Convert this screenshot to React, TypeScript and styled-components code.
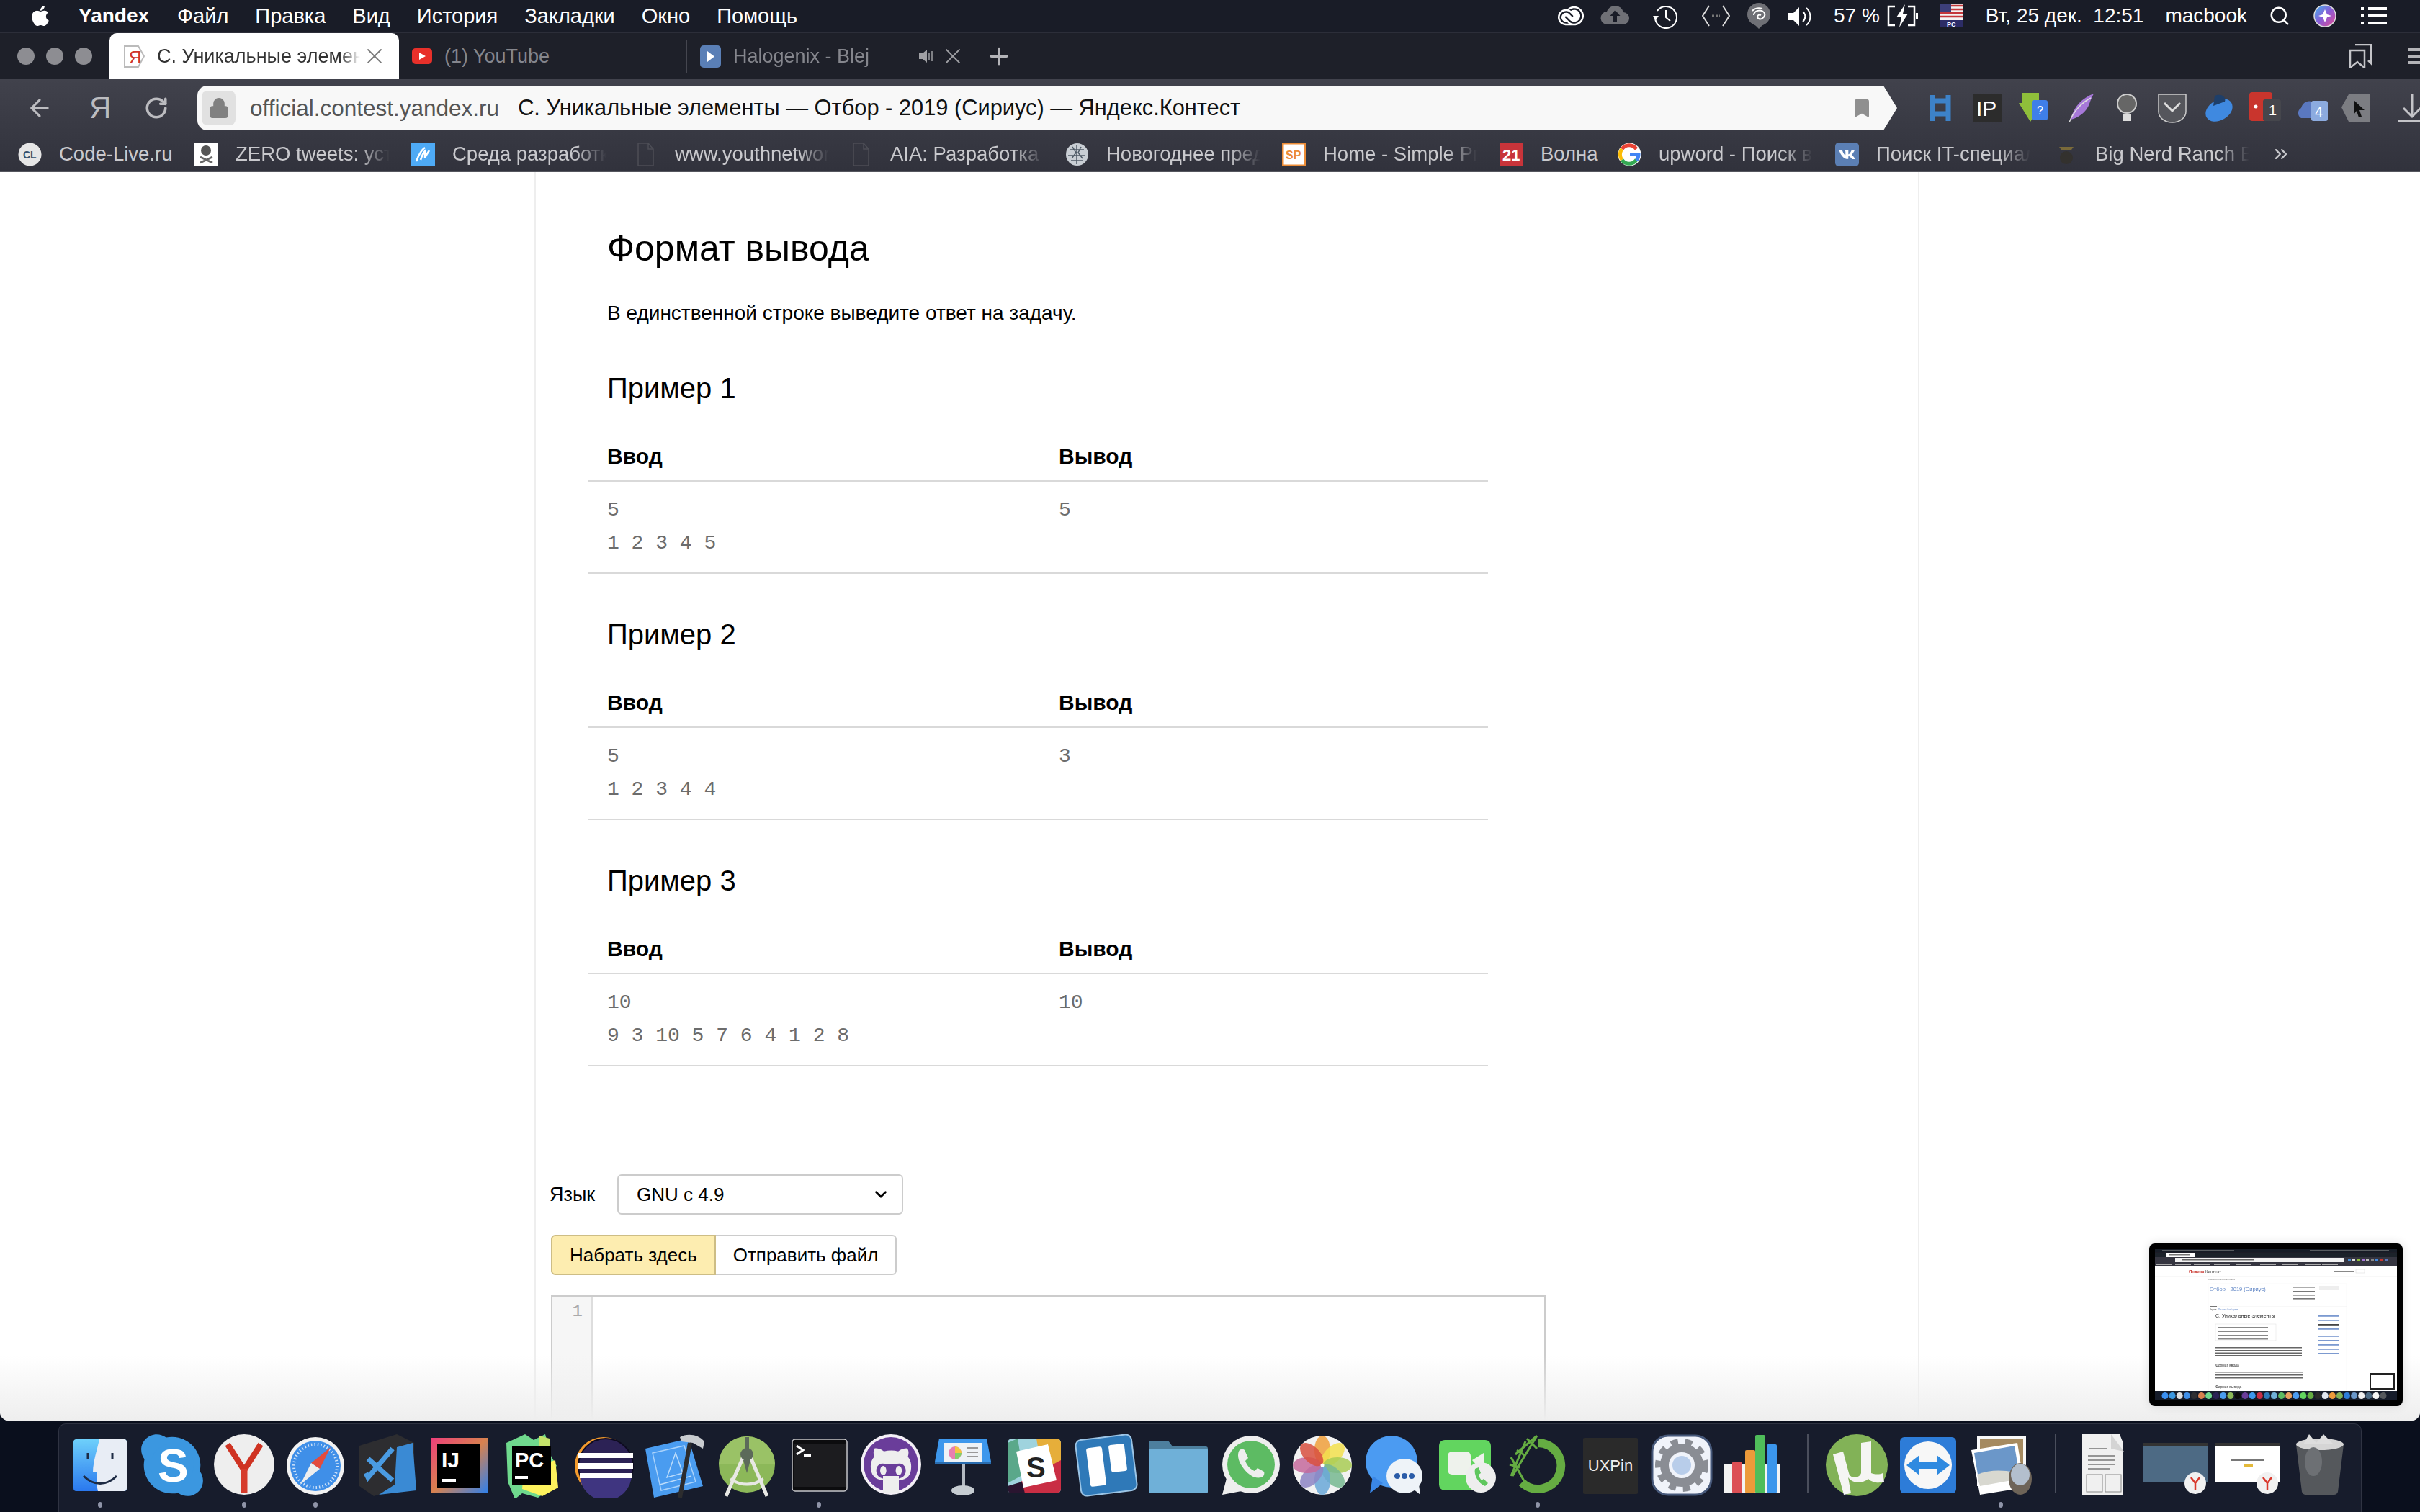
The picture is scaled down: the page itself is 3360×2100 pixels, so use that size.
import React from 'react';
import styled, { createGlobalStyle } from 'styled-components';
import { ArrowLeft, Bookmark, ChevronDown, ChevronsRight, Lock, Plus, RotateCw, Search, X } from 'lucide-react';
import { FaApple, FaGithubAlt, FaSkype, FaVk, FaWhatsapp } from 'react-icons/fa';
import { SiAdobecreativecloud } from 'react-icons/si';

const SANS = '"Liberation Sans", Arial, sans-serif';
const MONO = '"Liberation Mono", "Courier New", monospace';

const Global = createGlobalStyle`
  html, body { margin: 0; padding: 0; background: #000; }
  body { width: 3360px; height: 2100px; overflow: hidden; font-family: ${SANS}; }
`;

const Screen = styled.div`
  width: 3360px;
  height: 2100px;
  display: flex;
  flex-direction: column;
  overflow: hidden;
  background: #0a0f1d;
`;

/* ---- mac menu bar ---- */
const MenuBar = styled.div`
  height: 45px;
  flex: none;
  display: flex;
  align-items: center;
  padding: 0 46px 0 40px;
  box-sizing: border-box;
  background: #191c27;
  border-bottom: 1px solid #0b0d14;
  color: #fff;
  font-size: 29px;
`;
const AppName = styled.span`
  font-weight: 700;
  font-size: 28px;
  margin: 0 39px 0 37px;
`;
const MenuItems = styled.div`
  display: flex;
  gap: 37px;
`;
const Tray = styled.div`
  margin-left: auto;
  display: flex;
  align-items: center;
`;
const TrayItem = styled.div<{ $gap: number }>`
  display: flex;
  align-items: center;
  margin-left: ${p => p.$gap}px;
  white-space: pre;
  font-size: 28px;
`;

/* ---- tabs ---- */
const TabStrip = styled.div`
  height: 65px;
  flex: none;
  display: flex;
  align-items: stretch;
  background: #1e2029;
  border-top: 1px solid #2c2e39;
  box-sizing: border-box;
`;
const Lights = styled.div`
  width: 152px;
  display: flex;
  align-items: center;
  gap: 16px;
  padding-left: 24px;
  box-sizing: border-box;
`;
const Light = styled.span`
  width: 24px;
  height: 24px;
  border-radius: 50%;
  background: #8d8d92;
`;
const Tab = styled.div<{ $active?: boolean; $width: number }>`
  width: ${p => p.$width}px;
  box-sizing: border-box;
  display: flex;
  align-items: center;
  padding-left: ${p => (p.$active ? 18 : 16)}px;
  gap: 15px;
  font-size: 27px;
  color: ${p => (p.$active ? '#333' : '#85868d')};
  background: ${p => (p.$active ? '#fff' : 'transparent')};
  border-radius: ${p => (p.$active ? '10px 10px 0 0' : '0')};
`;
const TabTitle = styled.span<{ $width: number }>`
  width: ${p => p.$width}px;
  white-space: nowrap;
  overflow: hidden;
  mask-image: linear-gradient(to right, #000 90%, transparent);
`;
const TabClose = styled.span<{ $nudge: number; $color: string }>`
  display: flex;
  margin-left: ${p => p.$nudge}px;
  color: ${p => p.$color};
`;
const TabSep = styled.span`
  width: 1px;
  height: 46px;
  align-self: center;
  background: #45464f;
  flex: none;
`;
const PlusBox = styled.div`
  display: flex;
  align-items: center;
  margin-left: 16px;
  color: #b4b4b8;
`;
const StripEnd = styled.div`
  margin-left: auto;
  display: flex;
  align-items: center;
  gap: 50px;
  margin-right: -4px;
`;
const BurgerLines = styled.div`
  width: 20px;
  height: 22px;
  background: repeating-linear-gradient(to bottom, #b4b4b8 0 4px, transparent 4px 9px);
`;

/* ---- address bar ---- */
const Chrome = styled.div`
  flex: none;
  background: linear-gradient(to bottom, #41424c, #31323c);
  border-bottom: 1px solid #55565e;
`;
const Toolbar = styled.div`
  height: 71px;
  display: flex;
  align-items: flex-start;
  padding-top: 9px;
  box-sizing: border-box;
`;
const NavBox = styled.div`
  width: 274px;
  height: 62px;
  flex: none;
  display: flex;
  align-items: center;
  color: #bcbcc0;
`;
const BackArrow = styled.span`
  display: flex;
  margin-left: 36px;
`;
const NavYa = styled.span`
  font-size: 42px;
  margin: 0 46px 0 50px;
  color: #bcbcc0;
  line-height: 1;
`;
const AddressBar = styled.div`
  width: 2360px;
  height: 62px;
  flex: none;
  display: flex;
  align-items: center;
  padding-left: 6px;
  box-sizing: border-box;
  background: #f8f8f8;
  border-radius: 14px 0 0 14px;
  clip-path: polygon(0 0, 2341px 0, 100% 50%, 2341px 100%, 0 100%);
  font-size: 31.5px;
`;
const LockBox = styled.div`
  width: 47px;
  height: 48px;
  display: flex;
  align-items: center;
  justify-content: center;
  background: #e1e1e1;
  border-radius: 8px;
  color: #808080;
`;
const Host = styled.span`
  color: #555;
  margin: 0 26px 0 20px;
`;
const PageTitle = styled.span`
  color: #111;
  font-size: 30.8px;
`;
const StarBox = styled.div`
  margin-left: auto;
  margin-right: 34px;
  color: #8f8f8f;
  display: flex;
`;
const Extensions = styled.div`
  display: flex;
  align-items: center;
  height: 62px;
  margin-left: 45px;
`;
const Ext = styled.div<{ $gap: number }>`
  display: flex;
  margin-left: ${p => p.$gap}px;
`;

/* ---- bookmarks ---- */
const BookmarkBar = styled.div`
  height: 57px;
  box-sizing: border-box;
  display: flex;
  align-items: center;
  padding: 9px 0 0 25px;
  overflow: hidden;
`;
const Mark = styled.div<{ $width: number }>`
  width: ${p => p.$width}px;
  flex: none;
  display: flex;
  align-items: center;
  gap: 24px;
  color: #c9c9cd;
  font-size: 27.5px;
`;
const MarkIcon = styled.div`
  flex: none;
  width: 33px;
  height: 33px;
  display: flex;
`;
const MarkText = styled.span<{ $fade: boolean }>`
  white-space: nowrap;
  overflow: hidden;
  max-width: 214px;
  ${p => (p.$fade ? 'mask-image: linear-gradient(to right, #000 80%, transparent);' : '')}
`;

/* ---- page ---- */
const Viewport = styled.div`
  position: relative;
  flex: none;
  height: 1734px;
  background: #fff;
  overflow: hidden;
  border-radius: 0 0 12px 12px;
`;
const Sheet = styled.div`
  margin-left: 742px;
  width: 1923px;
  height: 100%;
  box-sizing: border-box;
  border-left: 2px solid #eee;
  border-right: 2px solid #eee;
  padding-top: 79px;
  color: #000;
`;
const Statement = styled.div`
  padding-left: 72px;
`;
const SectionTitle = styled.h2`
  margin: 0 0 45px 27px;
  font-size: 50px;
  line-height: 54px;
  font-weight: 400;
`;
const Para = styled.p`
  margin: 0 0 61px 27px;
  font-size: 28px;
  line-height: 36px;
`;
const ExampleTitle = styled.h3`
  margin: 0 0 52px 27px;
  font-size: 40px;
  line-height: 50px;
  font-weight: 400;
`;
const SampleTable = styled.div`
  width: 1250px;
  display: grid;
  grid-template-columns: 627px 623px;
  margin-bottom: 59px;
  border-bottom: 2px solid #d9d9d9;
`;
const HeadCell = styled.div`
  font-size: 30px;
  line-height: 36px;
  font-weight: 700;
  padding: 0 0 15px 27px;
  border-bottom: 2px solid #d9d9d9;
`;
const CodeCell = styled.pre`
  margin: 0;
  padding: 17px 0 17px 27px;
  font-family: ${MONO};
  font-size: 28px;
  line-height: 46px;
  color: #6c6c6c;
`;
const Form = styled.div`
  margin-top: 150px;
  padding-left: 21px;
`;
const LangRow = styled.div`
  display: flex;
  align-items: center;
  font-size: 27px;
  margin-bottom: 28px;
`;
const LangLabel = styled.span`
  width: 94px;
  margin-left: -2px;
`;
const SelectBox = styled.div`
  width: 397px;
  height: 56px;
  box-sizing: border-box;
  display: flex;
  align-items: center;
  justify-content: space-between;
  padding: 0 16px 0 25px;
  border: 2px solid #ccc;
  border-radius: 6px;
  font-size: 26px;
`;
const ModeRow = styled.div`
  display: flex;
  margin-bottom: 28px;
`;
const ModeButton = styled.div<{ $on?: boolean }>`
  height: 56px;
  box-sizing: border-box;
  display: flex;
  align-items: center;
  padding: 0 24px;
  font-size: 26px;
  background: ${p => (p.$on ? '#fdedb0' : '#fff')};
  border: 2px solid ${p => (p.$on ? '#cdbd85' : '#ccc')};
  border-radius: ${p => (p.$on ? '6px 0 0 6px' : '0 6px 6px 0')};
  ${p => (p.$on ? '' : 'border-left: 0;')}
`;
const Editor = styled.div`
  width: 1381px;
  height: 300px;
  box-sizing: border-box;
  border: 2px solid #ccc;
  display: flex;
`;
const Gutter = styled.div`
  width: 56px;
  flex: none;
  box-sizing: border-box;
  background: #f6f6f6;
  border-right: 2px solid #ddd;
  text-align: right;
  padding: 6px 12px 0 0;
  font-family: ${MONO};
  font-size: 24px;
  line-height: 30px;
  color: #aaa;
`;
const BottomFade = styled.div`
  position: absolute;
  left: 0;
  right: 0;
  bottom: 0;
  height: 90px;
  background: linear-gradient(to bottom, rgba(238, 238, 238, 0), #eee);
`;
const PreviewCard = styled.div`
  position: absolute;
  left: 2984px;
  top: 1488px;
  width: 352px;
  height: 226px;
  box-sizing: border-box;
  padding: 8px;
  background: #000;
  border-radius: 8px;
  box-shadow: 0 0 14px rgba(0, 0, 0, 0.12);
  display: flex;
`;

/* ---- dock ---- */
const DockArea = styled.div`
  flex: 1;
  padding: 4px 81px 0;
  background: #0a0f1d;
`;
const Dock = styled.div`
  height: 130px;
  width: 3198px;
  box-sizing: border-box;
  display: flex;
  padding: 12px 0 0 12px;
  background: #171c2c;
  border: 1px solid #2f3342;
  border-bottom: 0;
  border-radius: 10px 10px 0 0;
`;
const DockSlot = styled.div<{ $running?: boolean }>`
  position: relative;
  width: 90px;
  height: 90px;
  flex: none;
  margin-right: 9.8px;
  &::after {
    content: '';
    display: ${p => (p.$running ? 'block' : 'none')};
    position: absolute;
    left: 42px;
    bottom: -14px;
    width: 6px;
    height: 8px;
    border-radius: 50%;
    background: #8f94a8;
  }
`;
const DockDivider = styled.div<{ $margin: number }>`
  width: 2px;
  flex: none;
  height: 82px;
  margin: 2px ${p => p.$margin - 4}px 0 ${p => p.$margin - 6}px;
  background: #4a4e5c;
`;

const Svg: React.FC<{ children: React.ReactNode; size?: number; box?: number }> = ({ children, size = 90, box = 90 }) => (
  <svg width={size} height={size} viewBox={`0 0 ${box} ${box}`} fill="none">{children}</svg>
);

const txt = { fontFamily: SANS };

// favicons
const YaFav = () => (
  <Svg size={33} box={33}>
    <path d="M3 2h19l8 14-8 15H3z" fill="#fff" stroke="#bbb" strokeWidth="2" />
    <text x="9" y="26" fontSize="24" fill="#d0342c" style={txt}>Я</text>
  </Svg>
);
const SolidFav: React.FC<{ bg: string }> = ({ bg }) => (
  <Svg size={33} box={33}>
    <rect x="2" y="1" width="29" height="31" rx="5" fill={bg} />
    <path d="M12 9l10 7.5L12 24z" fill="#fff" />
  </Svg>
);
const DocFav = () => (
  <Svg size={33} box={33}>
    <path d="M6 1h14l7 8v23H6zM20 1v8h7" stroke="#4d4e56" strokeWidth="1.5" />
  </Svg>
);

const marks: { name: string; w: number; icon: React.ReactNode; fade?: boolean }[] = [
  { name: 'Code-Live.ru', w: 245, fade: false, icon: <Svg size={33} box={33}><circle cx="16.500" cy="16.500" r="16" fill="#e6e6e6" /><text x="7" y="22" fontSize="14" fontWeight="700" fill="#35506b" style={txt}>CL</text></Svg> },
  { name: 'ZERO tweets: уста', w: 301, icon: <Svg size={33} box={33}><rect width="33" height="33" fill="#fff" /><circle cx="16" cy="11" r="7" fill="#555" /><path d="M8 20l17 8M25 20L8 28" stroke="#666" strokeWidth="3" /></Svg> },
  { name: 'Среда разработки', w: 309, icon: <Svg size={33} box={33}><rect width="33" height="33" fill="#4eaaf5" /><path d="M7 26c3-8 6-15 12-19M13 24c2-6 4-10 6-12v9c2-4 4-7 6-10" stroke="#fff" strokeWidth="2.500" /></Svg> },
  { name: 'www.youthnetwork', w: 299, icon: <DocFav /> },
  { name: 'AIA: Разработка и', w: 300, icon: <DocFav /> },
  { name: 'Новогоднее предло', w: 301, icon: <Svg size={33} box={33}><circle cx="16.500" cy="16.500" r="15.500" fill="#c9ced4" /><path d="M16 3v27M6 10h20M4 18h24M8 25h17M10 6l5 8-6 8M22 6l-4 8 6 8" stroke="#4f5a66" strokeWidth="1.500" /></Svg> },
  { name: 'Home - Simple Proj', w: 302, icon: <Svg size={33} box={33}><rect x="1" y="1" width="31" height="31" fill="#fff" stroke="#ec8c36" strokeWidth="3" /><text x="5" y="23" fontSize="16" fontWeight="700" fill="#ec8c36" style={txt}>SP</text></Svg> },
  { name: 'Волна', w: 164, fade: false, icon: <Svg size={33} box={33}><rect width="33" height="33" fill="#c8343a" /><text x="4" y="25" fontSize="22" fontWeight="700" fill="#fff" style={txt}>21</text></Svg> },
  { name: 'upword - Поиск в Go', w: 302, icon: <Svg size={33} box={33}><circle cx="16.500" cy="16.500" r="16" fill="#fff" /><path d="M26 9a12 12 0 0 0-20 0" stroke="#ea4335" strokeWidth="5" /><path d="M6 9a12 12 0 0 0 0 15" stroke="#fbbc05" strokeWidth="5" /><path d="M6 24a12 12 0 0 0 20 0" stroke="#34a853" strokeWidth="5" /><path d="M17 16.500h12c0 4-1 6-3 8" stroke="#4285f4" strokeWidth="5" /></Svg> },
  { name: 'Поиск IT-специали', w: 304, icon: <Svg size={33} box={33}><rect width="33" height="33" rx="5" fill="#5b7fb4" /><FaVk x="5" y="5" size="23" color="#fff" /></Svg> },
  { name: 'Big Nerd Ranch Boo', w: 301, icon: <Svg size={33} box={33}><path d="M7 6h20l-3 4H10z" fill="#7a6a3a" /><circle cx="17" cy="21" r="9" fill="#33312e" /></Svg> },
];

// dock icons: one drawing per application
const dockIcons: { key: string; running?: boolean; art: React.ReactNode; divider?: number }[] = [
  { key: 'finder', running: true, art: <Svg><defs><linearGradient id="fa" x1="0" y1="0" x2="0" y2="1"><stop offset="0" stopColor="#6ed0fb" /><stop offset="1" stopColor="#2a78ee" /></linearGradient></defs><rect x="8" y="9" width="74" height="72" rx="4" fill="url(#fa)" /><path d="M44 9h34a4 4 0 0 1 4 4v64a4 4 0 0 1-4 4H42c-2-8-2-14-2-26h-5c0-14 5-28 9-46z" fill="#e8edf5" /><path d="M28 28v8M62 28v8" stroke="#1d2b44" strokeWidth="3" /><path d="M22 60c14 14 32 14 46 0" stroke="#1d2b44" strokeWidth="3" /></Svg> },
  { key: 'skype', art: <Svg><FaSkype x="-4" y="-4" size="98" color="#3b97e0" /><circle cx="45" cy="45" r="30" fill="#3b97e0" /><text x="25" y="68" fontSize="64" fontWeight="700" fill="#fff" style={txt}>S</text></Svg> },
  { key: 'yandex', running: true, art: <Svg><circle cx="45" cy="44" r="42" fill="#eeeeee" /><path d="M22 16l23 36 23-36" stroke="#cf3322" strokeWidth="8" /><path d="M45 50v33" stroke="#d63c2c" strokeWidth="9" /></Svg> },
  { key: 'safari', running: true, art: <Svg><circle cx="45" cy="46" r="40" fill="#f2f2f2" /><circle cx="45" cy="46" r="35" fill="#3f8fe8" /><circle cx="45" cy="46" r="30" stroke="#cfe2f8" strokeWidth="4" strokeDasharray="1.500 3" /><path d="M66 20L39 42l12 8z" fill="#e34b3d" /><path d="M24 72l15-30 12 8z" fill="#eeeeee" /></Svg> },
  { key: 'vscode', art: <Svg><path d="M6 18L58 2l24 12v56L26 88 6 74z" fill="#2d2d30" /><path d="M58 20l22-6 5 66-52 6 22-14z" fill="#3a8ad4" /><path d="M18 36l34 30M52 22L18 62l-3-6" stroke="#4a9be2" strokeWidth="7" /></Svg> },
  { key: 'idea', art: <Svg><defs><linearGradient id="ij" x1="0" y1="0" x2="1" y2="1"><stop offset="0" stopColor="#ee3f7a" /><stop offset=".5" stopColor="#d8824f" /><stop offset="1" stopColor="#2f80ec" /></linearGradient></defs><rect x="6" y="7" width="78" height="77" fill="url(#ij)" /><rect x="14" y="15" width="60" height="62" fill="#000" /><text x="20" y="48" fontSize="30" fontWeight="700" fill="#fff" style={txt}>IJ</text><rect x="20" y="64" width="20" height="4" fill="#fff" /></Svg> },
  { key: 'pycharm', art: <Svg><path d="M10 14L36 2l12 8L64 2l8 30 8 14-14 12 8 18-20 14-22-6-10 8-10-24z" fill="#6fd98d" /><path d="M34 52l44-14 4 38-22 12-28-10z" fill="#fdf25d" /><path d="M56 4l14 4 2 28-16-10z" fill="#c5e36a" /><rect x="18" y="18" width="54" height="54" fill="#000" /><text x="22" y="48" fontSize="29" fontWeight="700" fill="#fff" style={txt}>PC</text><rect x="22" y="60" width="18" height="4" fill="#fff" /></Svg> },
  { key: 'eclipse', art: <Svg><circle cx="45" cy="46" r="40" fill="#f39a2c" /><circle cx="48" cy="46" r="38" fill="#2c2255" stroke="#0d0a20" strokeWidth="2" /><path d="M12 58a36 36 0 0 0 72 0z" fill="#3f3580" /><rect x="10" y="28" width="76" height="7" fill="#fff" /><rect x="10" y="42" width="76" height="8" fill="#fff" /><rect x="12" y="56" width="72" height="7" fill="#fff" /></Svg> },
  { key: 'xcode', art: <Svg><path d="M4 22L64 8l20 66-68 16z" fill="#4a9cf0" /><path d="M14 28l44-10 16 50-48 12z" stroke="#a9d2fb" strokeWidth="1.500" /><path d="M34 62l12-34 10 28zM24 72l44-12" stroke="#bcdcfb" strokeWidth="1.500" /><path d="M66 14L52 90" stroke="#2c2c2e" strokeWidth="6" /><path d="M52 6c10-6 26-4 34 6l-2 10-14-8-16-2z" fill="#c9ccd0" /></Svg> },
  { key: 'android', art: <Svg><circle cx="45" cy="44" r="39" fill="#8cb859" /><path d="M6 44a39 39 0 0 1 78 0z" fill="#9ac266" /><path d="M45 22L16 88M45 22l28 66" stroke="#e8e8e4" strokeWidth="5" /><path d="M22 64c14 10 32 10 46 0" stroke="#e8e8e4" strokeWidth="4" /><circle cx="45" cy="30" r="9" fill="#5c6a5a" /><rect x="42" y="6" width="6" height="16" fill="#5c6a5a" /><path d="M40 38h10l-5 18z" fill="#5c6a5a" /></Svg> },
  { key: 'terminal', running: true, art: <Svg><rect x="8" y="9" width="76" height="72" rx="4" fill="#0c0c0e" stroke="#c8c8cc" strokeWidth="1.500" /><rect x="10" y="15" width="72" height="60" fill="#1c1c1f" /><path d="M14 18l9 6-9 6" stroke="#fff" strokeWidth="3" /><rect x="24" y="30" width="10" height="3" fill="#fff" /></Svg> },
  { key: 'github', art: <Svg><circle cx="45" cy="44" r="42" fill="#f4f0f6" /><circle cx="45" cy="44" r="38" fill="#6a3d9a" /><FaGithubAlt x="15" y="14" size="60" color="#eeeeee" /><rect x="34" y="60" width="22" height="24" fill="#eeeeee" /></Svg> },
  { key: 'keynote', art: <Svg><path d="M12 8h66l6 32H6z" fill="#3d97ec" /><rect x="18" y="14" width="54" height="26" fill="#eef2f6" /><circle cx="34" cy="28" r="9" fill="#e87fb0" /><path d="M34 28V19a9 9 0 0 1 9 9z" fill="#f4c542" /><path d="M34 28h9a9 9 0 0 1-9 9z" fill="#84cf6a" /><rect x="50" y="20" width="16" height="2" fill="#999" /><rect x="50" y="26" width="16" height="2" fill="#999" /><rect x="50" y="32" width="16" height="2" fill="#999" /><rect x="6" y="40" width="78" height="3" fill="#2a6db0" /><rect x="43" y="43" width="5" height="34" fill="#b4bac2" /><ellipse cx="45" cy="80" rx="16" ry="7" fill="#c6ccd2" /></Svg> },
  { key: 'slack', art: <Svg><rect x="8" y="8" width="74" height="76" rx="6" fill="#9fd3de" /><path d="M8 14l14-6 8 50-22 12z" fill="#5aa88a" /><path d="M48 8h28a6 6 0 0 1 6 6v44l-24 6z" fill="#e6ae3a" /><path d="M26 68l56-30v40a6 6 0 0 1-6 6H30z" fill="#c92e44" /><path d="M8 74l20-6 4 16H14a6 6 0 0 1-6-6z" fill="#2a1530" /><path d="M20 26l44-10 12 50-46 10z" fill="#fff" /><text x="34" y="62" fontSize="40" fontWeight="700" fill="#222" style={txt}>S</text></Svg> },
  { key: 'trello', art: <Svg><rect x="6" y="6" width="78" height="78" rx="8" transform="rotate(-7 45 45)" fill="#2f79b8" stroke="#9cc5e6" strokeWidth="2" /><rect x="20" y="20" width="22" height="54" rx="3" transform="rotate(-7 31 47)" fill="#fff" /><rect x="50" y="16" width="22" height="38" rx="3" transform="rotate(-7 61 35)" fill="#fff" /></Svg> },
  { key: 'folder', art: <Svg><path d="M4 14a3 3 0 0 1 3-3h24l6 8h46a3 3 0 0 1 3 3v58a3 3 0 0 1-3 3H7a3 3 0 0 1-3-3z" fill="#4d7f9e" /><rect x="4" y="22" width="82" height="62" rx="2" fill="#6fb0d8" /></Svg> },
  { key: 'whatsapp', art: <Svg><circle cx="46" cy="44" r="40" fill="#eeeeee" /><path d="M6 86l8-30 24 24z" fill="#eeeeee" /><FaWhatsapp x="5" y="3" size="82" color="#eeeeee" /><circle cx="46" cy="44" r="33" fill="#5dbb63" /><path d="M30 24c-4 6-2 16 6 26s16 14 24 12c4-1 5-5 4-8l-9-5-4 4c-6-2-11-8-13-14l4-4-5-11c-3-2-5-1-7 0z" fill="#eeeeee" /></Svg> },
  { key: 'photos', art: <Svg><circle cx="45" cy="45" r="41" fill="#f2f2f2" />{[['#f0a03c', 0], ['#f3e04e', 45], ['#a9cc55', 90], ['#77b890', 135], ['#6aa8d8', 180], ['#8d85c4', 225], ['#c56a9c', 270], ['#d8503f', 315]].map(([c, a]) => <ellipse key={a as number} cx="45" cy="24" rx="11" ry="20" fill={c as string} opacity=".85" transform={`rotate(${a} 45 45)`} />)}<circle cx="45" cy="45" r="2.500" fill="#fff" /></Svg> },
  { key: 'messages', art: <Svg><circle cx="42" cy="40" r="36" fill="#4b9bf2" /><path d="M16 60l-4 24 18-14z" fill="#3a86e6" /><ellipse cx="60" cy="60" rx="25" ry="24" fill="#eef3f8" /><path d="M72 78l10 8-2-14z" fill="#eef3f8" /><circle cx="50" cy="60" r="4" fill="#2a5ca8" /><circle cx="60" cy="60" r="4" fill="#2a5ca8" /><circle cx="70" cy="60" r="4" fill="#2a5ca8" /></Svg> },
  { key: 'facetime', art: <Svg><rect x="8" y="10" width="72" height="70" rx="8" fill="#62d55f" /><rect x="20" y="26" width="32" height="32" rx="6" fill="#eef2ec" /><path d="M54 38l16-10v28z" fill="#eef2ec" /><circle cx="66" cy="62" r="21" fill="#eeeeee" /><path d="M58 50c-2 8 4 20 14 24l4-4-6-6-3 2c-2-2-3-5-4-8l3-2-3-8z" fill="#5fc75e" /></Svg> },
  { key: 'ring', running: true, art: <Svg><path d="M45 14a32 32 0 1 1-22 55" stroke="#65ac42" strokeWidth="12" /><path d="M44 4L14 30M28 12l-20 48M8 34l22 40M10 60l34-56M30 8l14 14M16 24l12 8M6 44l14 4" stroke="#65ac42" strokeWidth="3" /></Svg> },
  { key: 'uxpin', art: <Svg><rect x="8" y="7" width="76" height="78" rx="2" fill="#2a2a2a" /><text x="46" y="53" fontSize="22" textAnchor="middle" fill="#eeeeee" style={txt}>UXPin</text></Svg> },
  { key: 'prefs', art: <Svg><rect x="4" y="4" width="82" height="82" rx="22" fill="#f0f3fa" stroke="#46587a" strokeWidth="3" /><circle cx="45" cy="45" r="24" stroke="#8a8d94" strokeWidth="12" /><circle cx="45" cy="45" r="33" stroke="#8a8d94" strokeWidth="8" strokeDasharray="10 10" /><circle cx="45" cy="45" r="13" fill="#b8cdea" /></Svg> },
  { key: 'numbers', divider: 26, art: <Svg><rect x="5" y="44" width="78" height="40" fill="#f3f3f3" /><rect x="16" y="40" width="14" height="44" rx="2" fill="#dc4f55" /><rect x="34" y="24" width="14" height="60" rx="2" fill="#ec9a3a" /><rect x="48" y="3" width="14" height="81" rx="2" fill="#4fbd5a" /><rect x="64" y="16" width="14" height="68" rx="2" fill="#3b96ec" /></Svg> },
  { key: 'utorrent', art: <Svg><ellipse cx="45" cy="45" rx="43" ry="43" fill="#82b257" /><path d="M12 30l14-4 8 30c2 8 14 8 17 0V14l14-2v44c6 2 12 2 16 0l2 12c-6 2-16 2-22-4-10 8-22 6-28-2l4 22-10 2z" fill="#f5f5f3" /></Svg> },
  { key: 'teamviewer', art: <Svg><rect x="5" y="6" width="78" height="78" rx="6" fill="#2d7cd8" /><circle cx="44" cy="45" r="33" fill="#f7f7f7" /><path d="M14 45l18-14v9h24v-9l18 14-18 14v-9H32v9z" fill="#2f8ae0" /></Svg> },
  { key: 'preview', running: true, divider: 26, art: <Svg><rect x="12" y="4" width="68" height="70" fill="#f8f8f8" /><rect x="16" y="8" width="60" height="60" fill="#a58a60" /><path d="M4 24l64-10 10 62-62 10z" fill="#fff" /><path d="M8 28l56-10 7 42-56 10z" fill="#6b97c9" /><path d="M12 58c20-8 40-6 58-2l2 8-56 10z" fill="#d8d8d0" /><ellipse cx="72" cy="64" rx="16" ry="22" fill="#6e6458" /><ellipse cx="72" cy="58" rx="13" ry="15" fill="#b3bfcd" /></Svg> },
  { key: 'doc', art: <Svg><path d="M14 2h52l4 10v74H14z" fill="#f0f0f0" /><path d="M54 2l18 24-18-4z" fill="#d4d4d4" /><path d="M24 22h24M22 32h38M22 38h38M22 44h38M22 50h30" stroke="#777" strokeWidth="1.500" /><rect x="20" y="58" width="22" height="24" stroke="#888" strokeWidth="1" /><rect x="46" y="58" width="22" height="24" stroke="#888" strokeWidth="1" /></Svg> },
  { key: 'shot1', art: <Svg><rect x="0" y="14" width="90" height="5" fill="#333" /><rect x="0" y="18" width="90" height="50" fill="#4d6a84" /><ellipse cx="72" cy="70" rx="15" ry="15" fill="#f1f1f1" /><path d="M66 62l6 8 6-8M72 70v10" stroke="#d9382c" strokeWidth="2.500" /></Svg> },
  { key: 'shot2', art: <Svg><rect x="0" y="14" width="90" height="5" fill="#333" /><rect x="0" y="18" width="90" height="50" fill="#fff" /><path d="M22 38h46" stroke="#777" strokeWidth="2" /><rect x="40" y="44" width="12" height="3" fill="#e3b93a" /><ellipse cx="72" cy="70" rx="15" ry="15" fill="#f1f1f1" /><path d="M66 62l6 8 6-8M72 70v10" stroke="#d9382c" strokeWidth="2.500" /></Svg> },
  { key: 'trash', art: <Svg><path d="M12 16h66l-8 66a6 6 0 0 1-6 4H26a6 6 0 0 1-6-4z" fill="#55585c" /><ellipse cx="45" cy="16" rx="33" ry="8" fill="#d5d5d5" /><path d="M22 16l8-14 10 12 10-12 14 14z" fill="#dedede" /><ellipse cx="36" cy="40" rx="12" ry="20" fill="#6d7074" /></Svg> },
];

const miniDock = ['#3b8ff0', '#3b97e0', '#e0e0e0', '#3f8fe8', '#2d2d30', '#d8824f', '#6fd98d', '#2c2255', '#4a9cf0', '#8cb859', '#0c0c0e', '#6a3d9a', '#3d97ec', '#c92e44', '#2f79b8', '#6fb0d8', '#5dbb63', '#e8a060', '#4b9bf2', '#62d55f', '#65ac42', '#2a2a2a', '#e0e6f0', '#ec9a3a', '#82b257', '#2d7cd8', '#6b97c9', '#f0f0f0', '#4d6a84', '#f5f5f5', '#55585c'];

// miniature of the earlier screenshot, as a plain drawing
const MiniShot = () => (
  <svg width="336" height="210" viewBox="0 0 336 210">
    <defs><filter id="soft"><feGaussianBlur stdDeviation="0.35" /></filter></defs>
    <g filter="url(#soft)">
      <rect width="336" height="210" fill="#fff" />
      <rect width="336" height="24" fill="#34353f" />
      <rect width="336" height="11" fill="#1e2029" />
      <rect width="336" height="4.500" fill="#191c27" />
      <rect x="10" y="1.500" width="100" height="1.500" fill="#999" />
      <rect x="215" y="1.500" width="110" height="1.500" fill="#999" />
      <rect x="15" y="5" width="40" height="6" fill="#fff" />
      <rect x="20" y="7" width="28" height="1.500" fill="#777" />
      <rect x="28" y="12" width="234" height="6" fill="#f2f2f2" />
      <rect x="38" y="14" width="100" height="1.500" fill="#666" />
      {[268, 274, 281, 287, 293, 300, 306, 312, 319].map((x, i) => <rect key={x} x={x} y="13" width="4" height="4" fill={['#4a8ad0', '#ddd', '#8fbf3a', '#a678d8', '#bbb', '#888', '#3f89e0', '#c9352d', '#5a78c0'][i]} />)}
      {[2, 28, 54, 82, 112, 146, 176, 208, 232].map(x => <rect key={x} x={x} y="20.500" width="22" height="1.500" fill="#aaa" />)}
      <text x="47" y="32.500" fontSize="6" fill="#444" style={txt}><tspan fill="#c9342c" fontWeight="700">Яндекс</tspan> Контест</text>
      <rect x="279" y="28" width="12" height="5" fill="#fff" stroke="#ccc" strokeWidth=".4" />
      <rect x="248" y="30" width="28" height="1.500" fill="#888" />
      <rect x="0" y="37" width="336" height=".4" fill="#eee" />
      <text x="74" y="43" fontSize="2.500" fill="#777" style={txt}>Компиляторы  Значения ошибок</text>
      <rect x="74" y="48" width="192" height="162" fill="#fff" stroke="#eee" strokeWidth=".4" />
      <text x="76" y="58" fontSize="7.500" fill="#5f85c5" style={txt}>Отбор - 2019 (Сириус)</text>
      <rect x="228" y="51" width="28" height="6" fill="#eee" />
      {[52, 58, 63, 68].map(y => <rect key={y} x="192" y={y} width="30" height="1.600" fill="#777" />)}
      <rect x="76" y="79" width="190" height=".4" fill="#eee" />
      <rect x="76" y="79" width="10" height=".8" fill="#555" />
      <text x="76" y="85" fontSize="2.800" fill="#333" style={txt}>Задачи</text>
      <text x="88" y="85" fontSize="2.800" fill="#5f85c5" style={txt}>Посылки  Сообщения</text>
      <text x="84" y="95" fontSize="7" fill="#222" style={txt}>С. Уникальные элементы</text>
      <rect x="84" y="104" width="84" height="23" fill="#fff" stroke="#ddd" strokeWidth=".5" />
      {[108, 113.500, 119, 124].map(y => <rect key={y} x="87" y={y} width="70" height="1.500" fill="#888" />)}
      {[136, 140, 143.500, 147].map(y => <rect key={y} x="84" y={y} width="120" height="1.500" fill="#666" />)}
      <text x="84" y="163" fontSize="5" fill="#333" style={txt}>Формат ввода</text>
      {[170, 174, 178].map(y => <rect key={y} x="84" y={y} width="122" height="1.500" fill="#666" />)}
      <text x="84" y="193" fontSize="5" fill="#333" style={txt}>Формат вывода</text>
      {[92, 98, 104, 110, 120, 126, 132, 138, 144].map(y => <rect key={y} x="226" y={y} width="30" height="1.800" fill={y === 104 ? '#444' : '#7c9ad0'} />)}
      <rect x="298" y="172" width="35" height="23" fill="#222" />
      <rect x="300" y="175" width="31" height="18" fill="#fff" />
      <rect y="197" width="336" height="13" fill="#171c2c" />
      {miniDock.map((c, i) => <circle key={i} cx={14 + i * 10.100} cy="203.500" r="4.500" fill={c} />)}
    </g>
  </svg>
);

const Example: React.FC<{ n: number; input: string; output: string }> = ({ n, input, output }) => (
  <>
    <ExampleTitle>Пример {n}</ExampleTitle>
    <SampleTable>
      <HeadCell>Ввод</HeadCell>
      <HeadCell>Вывод</HeadCell>
      <CodeCell>{input}</CodeCell>
      <CodeCell>{output}</CodeCell>
    </SampleTable>
  </>
);

const menuWords = ['Файл', 'Правка', 'Вид', 'История', 'Закладки', 'Окно', 'Помощь'];

const App: React.FC = () => (
  <Screen>
    <Global />
    <MenuBar>
      <FaApple size={32} color="#fff" />
      <AppName>Yandex</AppName>
      <MenuItems>{menuWords.map(w => <span key={w}>{w}</span>)}</MenuItems>
      <Tray>
        <TrayItem $gap={0}><SiAdobecreativecloud size={36} color="#fff" /></TrayItem>
        <TrayItem $gap={23}><Svg size={41} box={41}><path d="M10 32a9 9 0 0 1-1-18 12 12 0 0 1 23 1 8.500 8.500 0 0 1-1 17z" fill="#6f7076" /><path d="M20.500 12l-7 8h4.500v8h5v-8h4.500z" fill="#191c27" /></Svg></TrayItem>
        <TrayItem $gap={32}><Svg size={35} box={35}><path d="M6 10a15 15 0 1 1-3 9" stroke="#fff" strokeWidth="2" /><path d="M0 17h8l-4 6z" fill="#fff" /><path d="M18 9v10l6 5" stroke="#fff" strokeWidth="2" /></Svg></TrayItem>
        <TrayItem $gap={32}><Svg size={41} box={41}><path d="M11 6L2 20l9 14M30 6l9 14-9 14" stroke="#ddd" strokeWidth="2" /><path d="M15 20h11" stroke="#777" strokeWidth="3" strokeDasharray="3 2" /></Svg></TrayItem>
        <TrayItem $gap={20}><Svg size={38} box={38}><circle cx="19" cy="17" r="16" fill="#6f7076" /><path d="M12 18c0-6 10-9 14-4s-3 11-7 9-1-7 3-5M10 12c4-4 10-4 14-3" stroke="#fff" strokeWidth="2" /><path d="M14 32h10l-5 5z" fill="#6f7076" /></Svg></TrayItem>
        <TrayItem $gap={21}><Svg size={33} box={33}><path d="M1 12h7l8-8v26l-8-8H1z" fill="#fff" /><path d="M21 10a9 9 0 0 1 0 14M26 5a16 16 0 0 1 0 24" stroke="#fff" strokeWidth="2" /></Svg></TrayItem>
        <TrayItem $gap={31}>57 %</TrayItem>
        <TrayItem $gap={9}><Svg size={44} box={44}><path d="M12 9H3v26h9M30 9h9v26h-9" stroke="#fff" strokeWidth="2.500" /><path d="M26 6L14 24h7l-3 14 12-19h-7z" fill="#fff" /><rect x="41" y="18" width="3" height="8" fill="#fff" /></Svg></TrayItem>
        <TrayItem $gap={31}><Svg size={32} box={32}><rect width="32" height="22" fill="#f3f3f3" /><path d="M0 2h32M0 7h32M0 12h32M0 17h32" stroke="#c4373b" strokeWidth="2.500" /><rect width="15" height="11" fill="#3d3f7a" /><rect x="0" y="22" width="32" height="10" fill="#2c2c66" /><text x="9" y="31" fontSize="9" fontWeight="700" fill="#fff" style={txt}>PC</text></Svg></TrayItem>
        <TrayItem $gap={31}>Вт, 25 дек.  12:51</TrayItem>
        <TrayItem $gap={30}>macbook</TrayItem>
        <TrayItem $gap={30}><Search size={30} color="#fff" strokeWidth={2} /></TrayItem>
        <TrayItem $gap={32}><Svg size={32} box={32}><defs><linearGradient id="si" x1="0" y1="0" x2="1" y2="1"><stop offset="0" stopColor="#3fb7ee" /><stop offset=".5" stopColor="#8a5cd6" /><stop offset="1" stopColor="#e64a8f" /></linearGradient></defs><circle cx="16" cy="16" r="15" fill="url(#si)" stroke="#ddd" strokeWidth="1.500" /><path d="M16 7l3 7 6 2-6 2-3 7-3-7-6-2 6-2z" fill="#fff" /></Svg></TrayItem>
        <TrayItem $gap={32}><Svg size={38} box={38}><path d="M12 9h26M12 19h26M12 29h26" stroke="#fff" strokeWidth="4" /><path d="M2 9h4M2 19h4M2 29h4" stroke="#fff" strokeWidth="4" /></Svg></TrayItem>
      </Tray>
    </MenuBar>

    <TabStrip>
      <Lights><Light /><Light /><Light /></Lights>
      <Tab $active $width={402}>
        <YaFav />
        <TabTitle $width={282}>С. Уникальные элементы</TabTitle>
        <TabClose $nudge={-13} $color="#7a7a7a"><X size={36} strokeWidth={1.2} /></TabClose>
      </Tab>
      <Tab $width={399}>
        <Svg size={32} box={32}><rect x="2" y="5" width="28" height="22" rx="5" fill="#e8302a" /><path d="M12 11l9 5-9 5z" fill="#fff" /></Svg>
        <span>(1) YouTube</span>
      </Tab>
      <TabSep />
      <Tab $width={398}>
        <SolidFav bg="#5a7fb6" />
        <TabTitle $width={242}>Halogenix - Blej</TabTitle>
        <Svg size={22} box={22}><path d="M1 7h5l6-5v18l-6-5H1z" fill="#a0a0a4" /><path d="M15 6v10M19 4v14" stroke="#a0a0a4" strokeWidth="1.500" /></Svg>
        <TabClose $nudge={-7} $color="#a0a0a4"><X size={36} strokeWidth={1.2} /></TabClose>
      </Tab>
      <TabSep />
      <PlusBox><Plus size={36} strokeWidth={2.5} /></PlusBox>
      <StripEnd>
        <Svg size={34} box={34}><path d="M10 1h22v26l-4-4M3 9h20v24l-10-8-10 8z" stroke="#c4c4c8" strokeWidth="2.500" /></Svg>
        <BurgerLines />
      </StripEnd>
    </TabStrip>

    <Chrome>
      <Toolbar>
        <NavBox>
          <BackArrow><ArrowLeft size={38} /></BackArrow>
          <NavYa>Я</NavYa>
          <RotateCw size={34} strokeWidth={2.5} />
        </NavBox>
        <AddressBar>
          <LockBox><Lock size={30} fill="#808080" strokeWidth={2.5} /></LockBox>
          <Host>official.contest.yandex.ru</Host>
          <PageTitle>С. Уникальные элементы — Отбор - 2019 (Сириус) — Яндекс.Контест</PageTitle>
          <StarBox><Bookmark size={30} fill="#8f8f8f" /></StarBox>
        </AddressBar>
        <Extensions>
          <Ext $gap={0}><Svg size={36} box={36}><path d="M4 0v36M26 0v36M4 8h22M4 26h22" stroke="#3d82c8" strokeWidth="7" /></Svg></Ext>
          <Ext $gap={24}><Svg size={40} box={40}><rect width="40" height="40" fill="#2c2c2c" /><text x="5" y="31" fontSize="30" fill="#fff" style={txt}>IP</text></Svg></Ext>
          <Ext $gap={24}><Svg size={42} box={42}><path d="M4 0h24v14h6L16 40 0 14h4z" fill="#8fbf3a" /><rect x="18" y="10" width="22" height="28" rx="3" fill="#3f7fe8" /><text x="25" y="30" fontSize="16" fill="#fff" style={txt}>?</text></Svg></Ext>
          <Ext $gap={24}><Svg size={40} box={40}><path d="M38 0C22 6 10 18 6 36c10-2 22-10 26-22 2-6 4-10 6-14z" fill="#a678d8" /><path d="M4 40C10 24 22 12 34 6" stroke="#ddd" strokeWidth="1.500" /></Svg></Ext>
          <Ext $gap={24}><Svg size={40} box={40}><circle cx="20" cy="14" r="13" fill="#666" stroke="#ccc" strokeWidth="2" /><rect x="14" y="28" width="12" height="10" fill="#ddd" /></Svg></Ext>
          <Ext $gap={22}><Svg size={42} box={42}><path d="M2 2h38v24a19 15 0 0 1-38 0z" fill="#55565c" stroke="#ccc" strokeWidth="1.500" /><path d="M10 14l11 11 11-11" stroke="#ddd" strokeWidth="3" /></Svg></Ext>
          <Ext $gap={22}><Svg size={42} box={42}><ellipse cx="22" cy="24" rx="20" ry="14" transform="rotate(-30 22 24)" fill="#3f89e0" /><path d="M16 4c10-4 16 2 14 8L14 18z" fill="#1e3f6a" /></Svg></Ext>
          <Ext $gap={22}><Svg size={44} box={44}><rect width="32" height="40" rx="4" fill="#c9352d" /><circle cx="9" cy="20" r="2.500" fill="#fff" /><rect x="19" y="10" width="25" height="30" rx="3" fill="#45464c" /><text x="27" y="32" fontSize="20" fill="#fff" style={txt}>1</text></Svg></Ext>
          <Ext $gap={22}><Svg size={44} box={44}><path d="M6 36a8 8 0 0 1 0-14c2-8 10-12 16-8v22z" fill="#5a78c0" /><rect x="20" y="12" width="23" height="28" rx="3" fill="#8cabdf" /><text x="25" y="34" fontSize="20" fill="#fff" style={txt}>4</text></Svg></Ext>
          <Ext $gap={18}><Svg size={42} box={42}><path d="M10 2h30v38H10L0 20z" fill="#7c7d82" /><path d="M17 10l15 14-7 0 3 9-4 1-3-9-4 5z" fill="#111" /></Svg></Ext>
          <Ext $gap={36}><Svg size={40} box={40}><path d="M20 0v30M8 20l12 12 12-12" stroke="#c4c4c8" strokeWidth="3" /><rect x="0" y="36" width="40" height="3" fill="#c4c4c8" /></Svg></Ext>
        </Extensions>
      </Toolbar>
      <BookmarkBar>
        {marks.map(m => (
          <Mark key={m.name} $width={m.w}>
            <MarkIcon>{m.icon}</MarkIcon>
            <MarkText $fade={m.fade !== false}>{m.name}</MarkText>
          </Mark>
        ))}
        <ChevronsRight size={28} color="#c9c9cd" />
      </BookmarkBar>
    </Chrome>

    <Viewport>
      <Sheet>
        <Statement>
          <SectionTitle>Формат вывода</SectionTitle>
          <Para>В единственной строке выведите ответ на задачу.</Para>
          <Example n={1} input={'5\n1 2 3 4 5'} output="5" />
          <Example n={2} input={'5\n1 2 3 4 4'} output="3" />
          <Example n={3} input={'10\n9 3 10 5 7 6 4 1 2 8'} output="10" />
        </Statement>
        <Form>
          <LangRow>
            <LangLabel>Язык</LangLabel>
            <SelectBox>GNU c 4.9<ChevronDown size={26} strokeWidth={2.5} /></SelectBox>
          </LangRow>
          <ModeRow>
            <ModeButton $on>Набрать здесь</ModeButton>
            <ModeButton>Отправить файл</ModeButton>
          </ModeRow>
          <Editor><Gutter>1</Gutter></Editor>
        </Form>
      </Sheet>
      <BottomFade />
      <PreviewCard><MiniShot /></PreviewCard>
    </Viewport>

    <DockArea>
      <Dock>
        {dockIcons.map(icon => (
          <React.Fragment key={icon.key}>
            <DockSlot $running={icon.running}>{icon.art}</DockSlot>
            {icon.divider ? <DockDivider $margin={icon.divider} /> : null}
          </React.Fragment>
        ))}
      </Dock>
    </DockArea>
  </Screen>
);

export default App;
